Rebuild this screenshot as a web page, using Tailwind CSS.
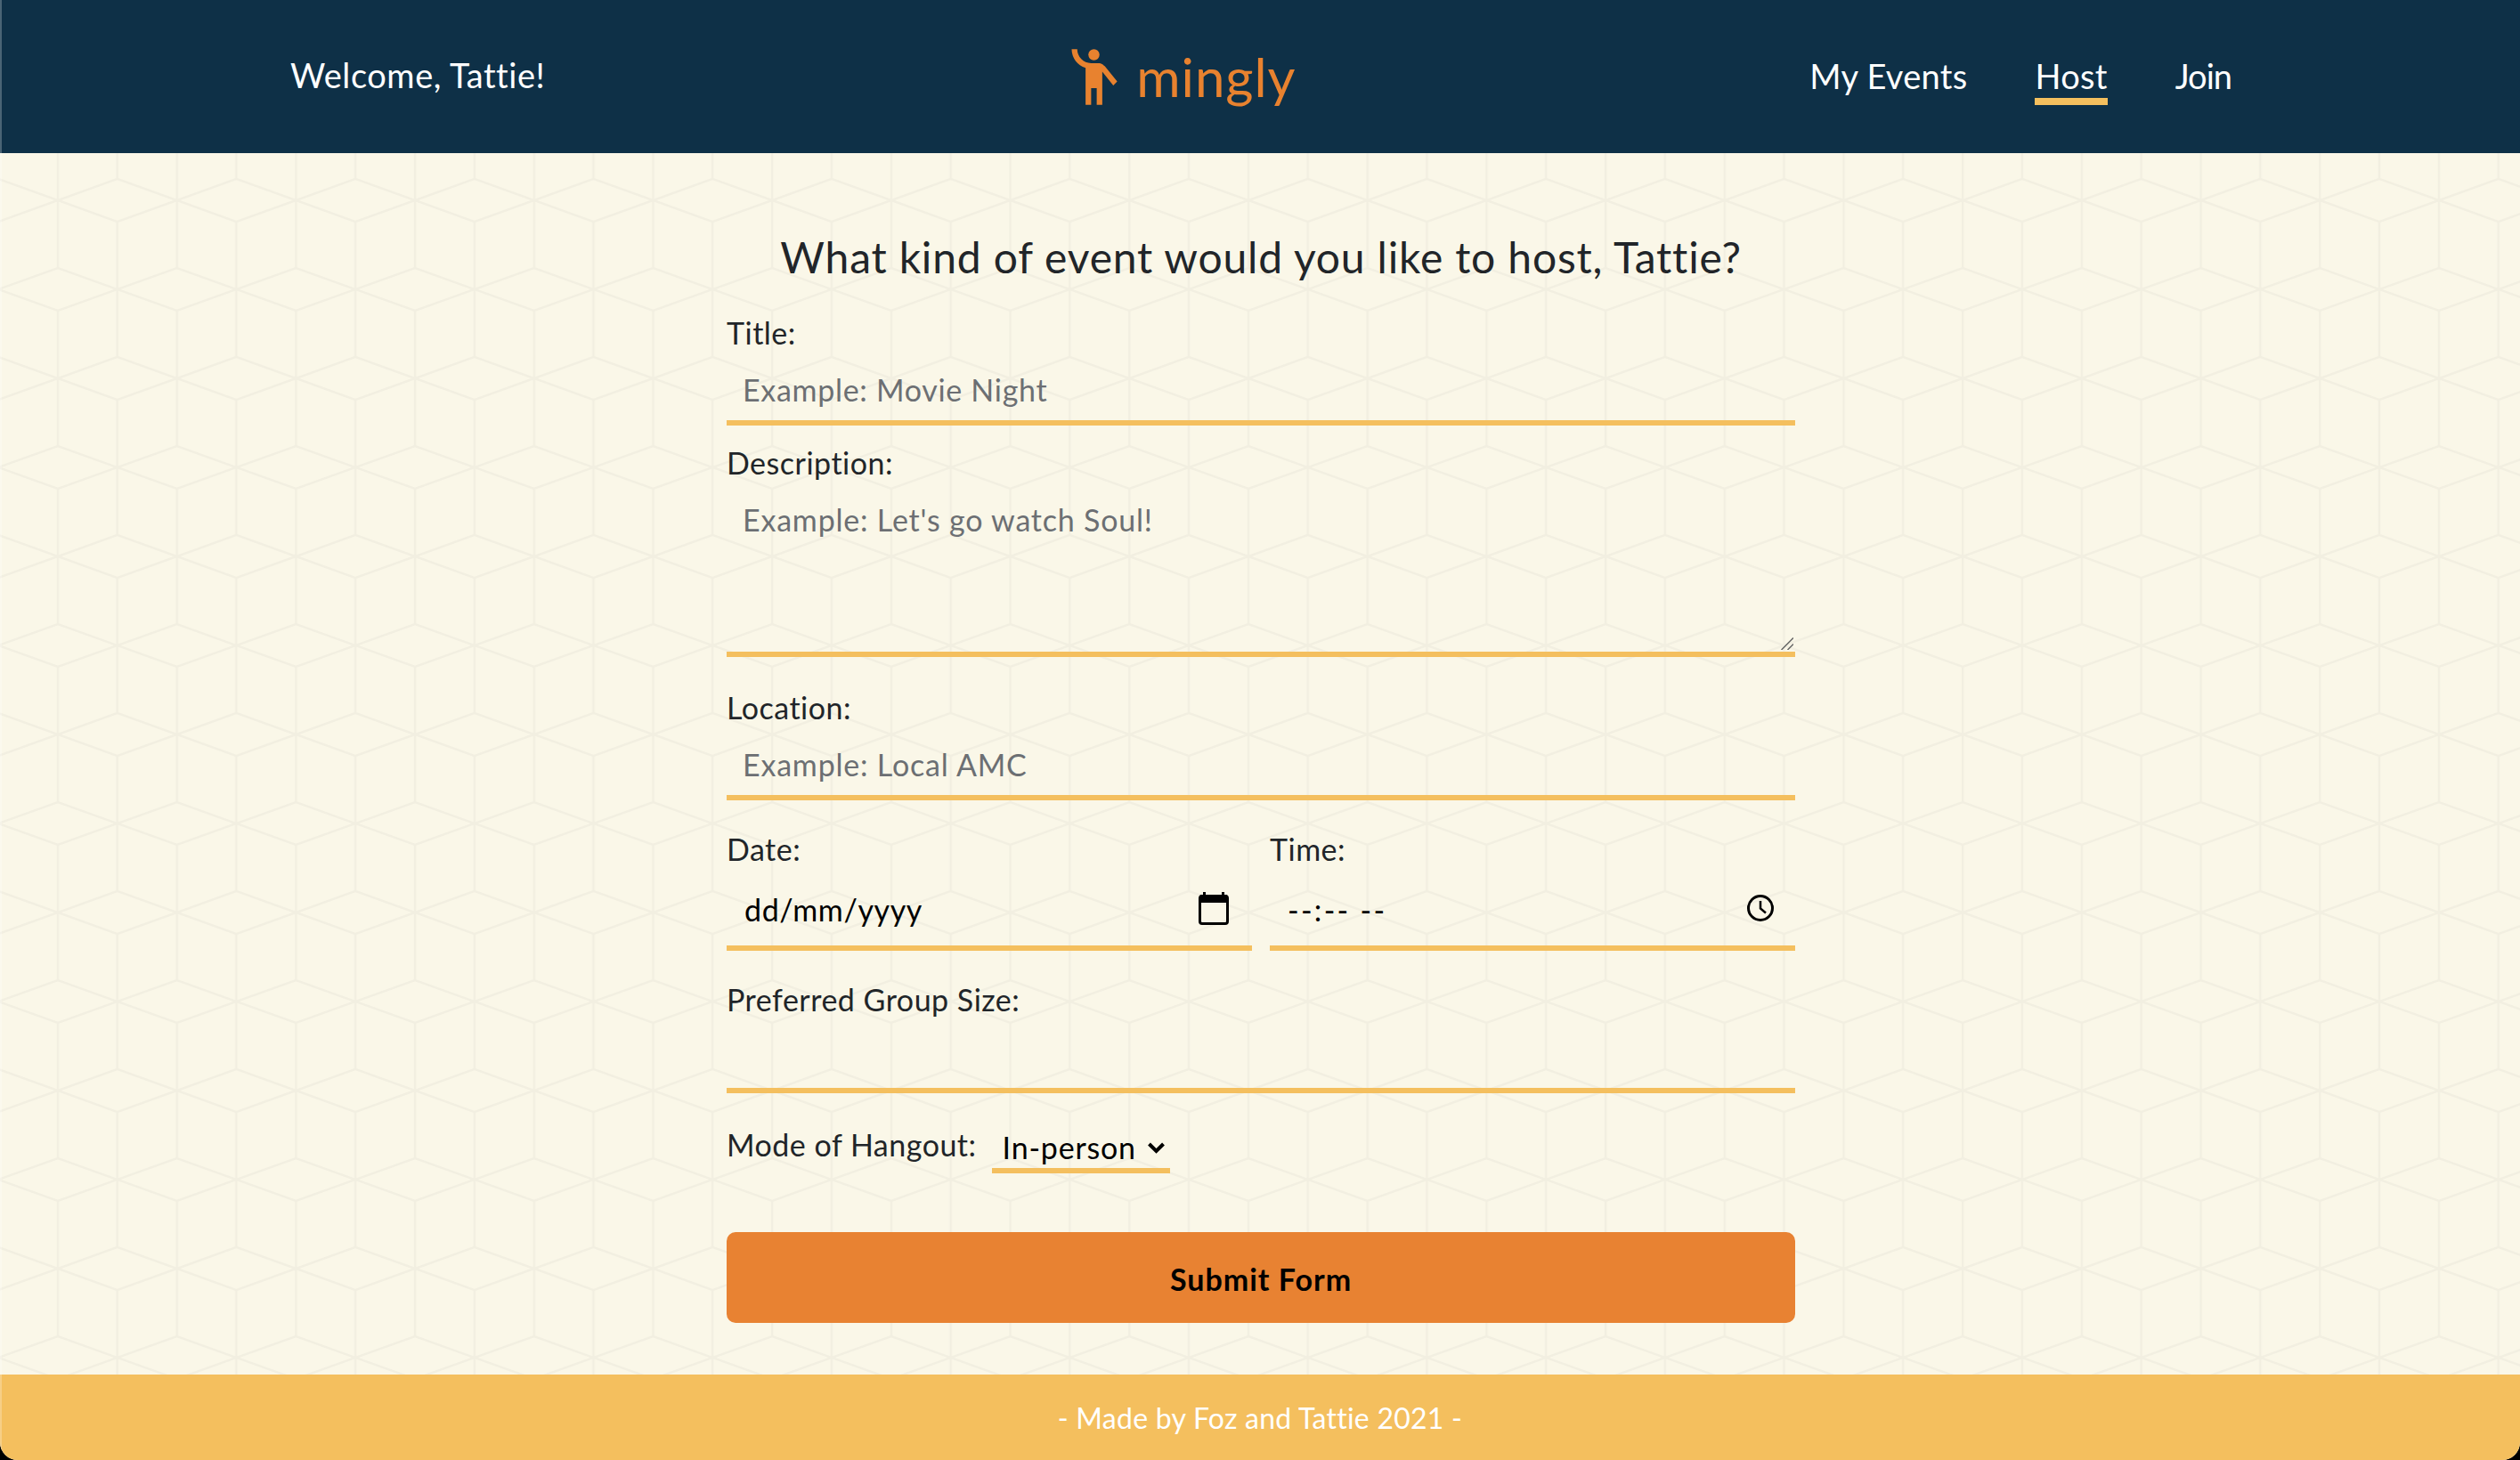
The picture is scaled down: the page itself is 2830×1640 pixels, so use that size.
<!DOCTYPE html>
<html lang="en">
<head>
  <meta charset="UTF-8" />
  <meta name="viewport" content="width=device-width, initial-scale=1.0"/>
  <title>Mingly - Host</title>
  <script src="https://cdn.jsdelivr.net/npm/@tailwindcss/browser@4"></script>
</head>
<body class="bg-black font-['Lato',sans-serif] text-[#212529]">
  <div class="relative flex flex-col h-[1640px] overflow-hidden rounded-b-[20px] bg-[#faf7e8]">

    <!-- Cube background -->
    <svg class="absolute top-0 left-0 w-full h-full" xmlns="http://www.w3.org/2000/svg">
      <defs>
        <pattern id="cubes" x="-2" y="125" width="133.7" height="200" patternUnits="userSpaceOnUse">
          <path d="M0 0 L67 24 L133.7 0 M0 200 L67 176 L133.7 200 M0 76 L67 100 L0 124 M133.7 76 L67 100 L133.7 124 M67 24 V176 M0 0 V76 M0 124 V200 M133.7 0 V76 M133.7 124 V200" fill="none" stroke="#f2efe1" stroke-width="2.5"/>
        </pattern>
      </defs>
      <rect width="100%" height="100%" fill="url(#cubes)"/>
    </svg>

    <!-- Navbar -->
    <nav class="relative flex items-center justify-between h-[172px] shrink-0 bg-[#0e3047] pl-[326px] pr-[324px] text-white">
      <div class="text-[38px] tracking-[0.55px] -mt-[3px]">Welcome, Tattie!</div>
      <a href="#" class="flex items-center ml-[2px] text-[#e8822f]">
        <svg class="w-[75px] h-[75px]" viewBox="0 0 24 24" fill="currentColor">
          <circle cx="12" cy="4" r="2"/>
          <path d="M15.89 8.11C15.5 7.72 14.83 7 13.53 7h-2.54C8.24 6.99 6 4.75 6 2H4c0 3.16 2.11 5.84 5 6.71V22h2v-6h2v6h2V10.05L18.95 15l1.41-1.41-4.47-5.48z"/>
        </svg>
        <span class="ml-[10px] text-[60px] leading-[72px] tracking-[0.9px]">mingly</span>
      </a>
      <div class="flex items-center gap-[76px] text-[38px] tracking-[0.3px]">
        <a href="#" class="pt-[8px] pb-[2px] leading-[46px] border-b-[8px] border-transparent">My Events</a>
        <a href="#" class="pt-[8px] pb-[2px] leading-[46px] border-b-[8px] border-[#f4bf5e]">Host</a>
        <a href="#" class="pt-[8px] pb-[2px] leading-[46px] tracking-[-1px] border-b-[8px] border-transparent">Join</a>
      </div>
    </nav>

    <!-- Form -->
    <main class="relative flex-1">
      <form class="w-[1200px] ml-[816px] text-[34px] tracking-[0.5px]">
        <h1 class="mt-[85px] h-[60px] leading-[64px] text-[48px] tracking-[0.83px] text-center">What kind of event would you like to host, Tattie?</h1>

        <label class="block mt-[34px] h-[44px] leading-[46px]">Title:</label>
        <input type="text" placeholder="Example: Movie Night" class="block w-full h-[83px] pl-[18px] pt-[8px] tracking-[0.7px] bg-transparent outline-none border-b-[6px] border-[#f4bf5e] placeholder:text-[#6c6f73]" />

        <label class="block mt-[19px] h-[44px] leading-[46px]">Description:</label>
        <div class="relative">
          <textarea placeholder="Example: Let's go watch Soul!" class="block w-full h-[197px] pl-[18px] pt-[21px] leading-[44px] tracking-[0.8px] resize-none bg-transparent outline-none border-b-[6px] border-[#f4bf5e] placeholder:text-[#6c6f73]"></textarea>
          <svg class="absolute right-[2px] bottom-[8px] w-[14px] h-[14px] pointer-events-none" viewBox="0 0 14 14" fill="none" stroke="#666" stroke-width="1.5">
            <path d="M0.5 14L14 0.5M7.5 14L14 7.5"/>
          </svg>
        </div>

        <label class="block mt-[34px] h-[44px] leading-[46px]">Location:</label>
        <input type="text" placeholder="Example: Local AMC" class="block w-full h-[83px] pl-[18px] pt-[8px] tracking-[0.8px] bg-transparent outline-none border-b-[6px] border-[#f4bf5e] placeholder:text-[#6c6f73]" />

        <div class="flex gap-[20px] mt-[32px]">
          <div class="flex-1">
            <label class="block h-[44px] leading-[46px]">Date:</label>
            <div class="flex items-center h-[93px] pl-[20px] pr-[26px] border-b-[6px] border-[#f4bf5e]">
              <input type="text" value="dd/mm/yyyy" class="flex-1 min-w-0 pt-[6px] tracking-[0.6px] bg-transparent outline-none text-black" />
              <svg class="w-[34px] h-[37px] mt-[3px]" viewBox="0 0 34 37" fill="none">
                <rect x="1.5" y="4.5" width="31" height="31" rx="2.5" stroke="#000" stroke-width="3"/>
                <rect x="1.5" y="3" width="31" height="9" rx="1.5" fill="#000"/>
                <rect x="5" y="0" width="3" height="5" fill="#000"/>
                <rect x="26" y="0" width="3" height="5" fill="#000"/>
              </svg>
            </div>
          </div>
          <div class="flex-1">
            <label class="block h-[44px] leading-[46px]">Time:</label>
            <div class="flex items-center h-[93px] pl-[20px] pr-[23px] border-b-[6px] border-[#f4bf5e]">
              <input type="text" value="--:-- --" class="flex-1 min-w-0 pt-[6px] tracking-[2.3px] bg-transparent outline-none text-black" />
              <svg class="w-[32px] h-[32px] mt-[3px]" viewBox="0 0 32 32" fill="none" stroke="#000">
                <circle cx="16" cy="16" r="13.5" stroke-width="3"/>
                <path d="M16 8v8.5l6 5" stroke-width="2.5"/>
              </svg>
            </div>
          </div>
        </div>

        <label class="block mt-[32px] h-[44px] leading-[46px]">Preferred Group Size:</label>
        <input type="number" class="block w-full h-[84px] bg-transparent outline-none border-b-[6px] border-[#f4bf5e]" />

        <div class="flex items-start mt-[35px]">
          <label class="h-[44px] leading-[46px]">Mode of Hangout:</label>
          <div class="relative w-[200px] h-[55px] ml-[17px] border-b-[6px] border-[#f4bf5e]">
            <select class="block w-full h-[46px] pl-[12px] tracking-[0.8px] bg-transparent outline-none appearance-none text-black">
              <option>In-person</option>
              <option>Online</option>
            </select>
            <svg class="absolute top-[20px] right-[6px] w-[19px] h-[13px] pointer-events-none" viewBox="0 0 19 13" fill="none" stroke="#000" stroke-width="4">
              <path d="M1.5 2l8 8 8-8"/>
            </svg>
          </div>
        </div>

        <button type="button" class="block w-full h-[102px] mt-[66px] pt-[3px] rounded-[10px] bg-[#e88232] font-bold tracking-[1px] text-black">Submit Form</button>
      </form>
    </main>

    <!-- Footer -->
    <footer class="relative flex items-center justify-center h-[96px] shrink-0 pt-[1px] bg-[#f4bf5e] text-white text-[32px] tracking-[0.25px]">- Made by Foz and Tattie 2021 -</footer>

    <!-- Window edge -->
    <div class="absolute top-0 left-0 w-[2px] h-full bg-white/25"></div>
  </div>
</body>
</html>
